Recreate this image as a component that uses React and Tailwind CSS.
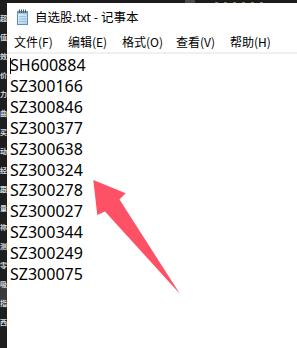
import React from "react";

const codes = [
  "SH600884",
  "SZ300166",
  "SZ300846",
  "SZ300377",
  "SZ300638",
  "SZ300324",
  "SZ300278",
  "SZ300027",
  "SZ300344",
  "SZ300249",
  "SZ300075",
];

const sideChars = ["超", "值", "效", "价", "力", "曲", "买", "动", "经", "跟", "量", "祢", "测", "零", "吸", "指", "西"];

const menus = ["文件(F)", "编辑(E)", "格式(O)", "查看(V)", "帮助(H)"];

function NotepadIcon() {
  return (
    <svg width="13" height="16" viewBox="0 0 13 16">
      <defs>
        <linearGradient id="pad" x1="0" y1="0" x2="1" y2="1">
          <stop offset="0" stopColor="#e6f3fc" />
          <stop offset="1" stopColor="#a9cfee" />
        </linearGradient>
      </defs>
      <rect x="1.5" y="2.5" width="10" height="13" fill="url(#pad)" stroke="#5f8fb8" strokeWidth="1" />
      <rect x="1.5" y="2.5" width="10" height="2" fill="#6f9cc5" />
      {[3, 5, 7, 9].map((x) => (
        <rect key={x} x={x} y="0.5" width="1" height="3.5" fill="#3f5f7f" />
      ))}
      <line x1="3" y1="7.5" x2="10" y2="7.5" stroke="#8fb6d8" strokeWidth="0.8" />
      <line x1="3" y1="10" x2="10" y2="10" stroke="#8fb6d8" strokeWidth="0.8" />
      <line x1="3" y1="12.5" x2="10" y2="12.5" stroke="#8fb6d8" strokeWidth="0.8" />
    </svg>
  );
}

export default function App() {
  return (
    <div className="relative w-[297px] h-[348px] overflow-hidden bg-[#1c1c1c] flex flex-col" style={{ fontFamily: '"Noto Sans", "Noto Sans CJK SC", sans-serif' }}>
      {/* top dark strip */}
      <div className="h-[3px] flex shrink-0">
        <div className="w-[185px]" />
        <div className="w-[10px] bg-[#4a4a4a]" />
        <div className="w-[20px]" />
        <div className="flex gap-[6px] items-end">
          <div className="w-[3px] h-[1px] bg-[#6a8a3a]" />
          <div className="w-[3px] h-[1px] bg-[#6a8a3a]" />
          <div className="w-[3px] h-[1px] bg-[#6a8a3a]" />
          <div className="w-[3px] h-[1px] bg-[#6a8a3a]" />
          <div className="w-[3px] h-[1px] bg-[#6a8a3a]" />
          <div className="w-[3px] h-[1px] bg-[#6a8a3a]" />
        </div>
      </div>
      <div className="flex flex-1 min-h-0">
        {/* left strip */}
        <div className="w-[7px] shrink-0 overflow-hidden relative bg-[#1e1e1e]">
          <div className="absolute left-0 right-0 top-[280px] h-[18px] bg-[#3a3a3a]" />
          <div className="relative flex flex-col items-center pt-[6px] text-[7px] leading-[19px] text-[#dcdcdc] font-bold" style={{ fontFamily: '"Noto Sans CJK SC", sans-serif' }}>
            {sideChars.map((c, i) => (
              <span key={i}>{c}</span>
            ))}
          </div>
        </div>
        {/* window */}
        <div className="flex-1 bg-white flex flex-col">
          <div className="h-[28px] flex items-center pl-[9px] gap-[6px] shrink-0">
            <NotepadIcon />
            <span className="text-[12.5px] text-black leading-none" style={{ fontFamily: '"Noto Sans CJK SC", sans-serif' }}>自选股.txt - 记事本</span>
          </div>
          <div className="h-[21px] flex items-center pl-[7px] shrink-0 text-[12px] text-black" style={{ fontFamily: '"Noto Sans CJK SC", sans-serif' }}>
            {menus.map((m, i) => (
              <span key={i} className="w-[54px] shrink-0 leading-none">{m}</span>
            ))}
          </div>
          <div className="h-[2px] bg-[#f0f0f0] shrink-0" />
          <div className="relative flex flex-col pl-[3px] pt-[1px] text-[16px] leading-[20.9px] text-black">
            <div className="absolute left-[3px] top-[4px] w-[1px] h-[16px] bg-black" />
            {codes.map((c) => (
              <span key={c}>{c}</span>
            ))}
          </div>
        </div>
      </div>
      {/* arrow overlay */}
      <svg className="absolute left-0 top-0 pointer-events-none" width="297" height="348" viewBox="0 0 297 348">
        <polygon
          points="93.3,180 125.7,193.3 119.5,199.5 180,294 105,211.5 97.3,215"
          fill="#ff5166"
        />
      </svg>
    </div>
  );
}
